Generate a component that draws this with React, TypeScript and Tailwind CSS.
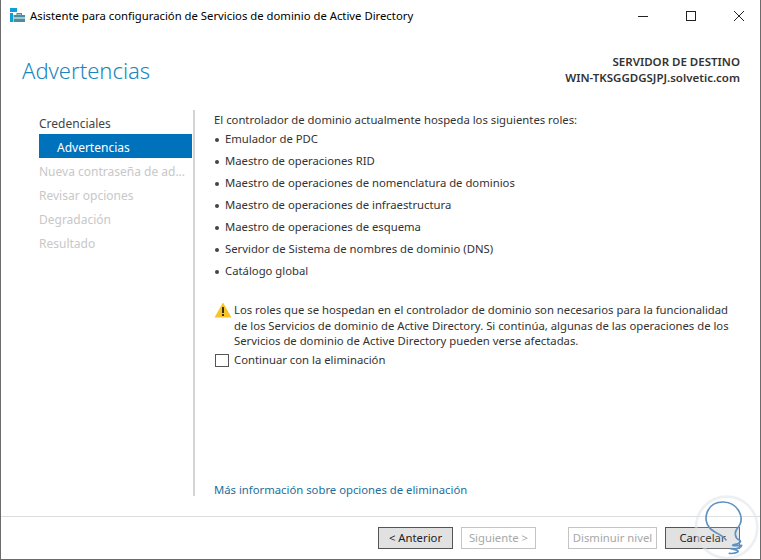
const roles = [
  "Emulador de PDC",
  "Maestro de operaciones RID",
  "Maestro de operaciones de nomenclatura de dominios",
  "Maestro de operaciones de infraestructura",
  "Maestro de operaciones de esquema",
  "Servidor de Sistema de nombres de dominio (DNS)",
  "Catálogo global",
];
const steps = ["Nueva contraseña de ad...", "Revisar opciones", "Degradación", "Resultado"];

export default function App() {
  return (
    <div className="w-[761px] h-[560px] bg-white flex flex-col border-l border-r border-b border-[#6b6b6b] text-[11.3px] text-[#333] overflow-hidden relative" style={{ fontFamily: '"Noto Sans", sans-serif' }}>
      <div className="h-[32px] flex items-center shrink-0">
        <svg width="16" height="14" viewBox="0 0 16 14" className="ml-[9px] mt-[-2px] shrink-0">
          <rect x="0" y="0" width="7" height="4" fill="#0e9fd8" />
          <rect x="0" y="5" width="3" height="9" fill="#0e9fd8" />
          <rect x="3.5" y="7" width="11.5" height="7" fill="#4a8f9c" />
          <rect x="7" y="5.5" width="4.5" height="1.5" fill="none" stroke="#4a8f9c" />
          <rect x="3.5" y="9.5" width="11.5" height="1" fill="#ffffff" />
        </svg>
        <span className="ml-[4px] text-black">Asistente para configuración de Servicios de dominio de Active Directory</span>
        <div className="ml-auto flex items-center">
          <svg width="12" height="12" viewBox="0 0 12 12" className="mr-[36px]"><path d="M1 6.5h10" stroke="#222" /></svg>
          <svg width="12" height="12" viewBox="0 0 12 12" className="mr-[36px]"><rect x="1.5" y="1.5" width="9" height="9" fill="none" stroke="#222" /></svg>
          <svg width="12" height="12" viewBox="0 0 12 12" className="mr-[15px]"><path d="M1 1l10 10M11 1L1 11" stroke="#222" /></svg>
        </div>
      </div>

      <div className="h-[78px] shrink-0 flex justify-between pl-[21px] pr-[20px]">
        <h1 className="text-[22px] font-light text-[#1a86bd] mt-[22px] leading-[32px]">Advertencias</h1>
        <div className="text-right font-semibold text-[11.5px] leading-[16px] mt-[22px] text-[#333]">
          <div>SERVIDOR DE DESTINO</div>
          <div>WIN-TKSGGDGSJPJ.solvetic.com</div>
        </div>
      </div>

      <div className="flex h-[386px] shrink-0">
        <nav className="w-[194px] shrink-0 pl-[38px] border-r-2 border-[#d4d4d4] text-[12px]">
          <div className="w-[153px] h-[24px] leading-[28px] text-[#444]">Credenciales</div>
          <div className="w-[153px] h-[24px] leading-[28px] pl-[18px] bg-[#0072bc] text-white">Advertencias</div>
          {steps.map((s) => (
            <div key={s} className="w-[153px] h-[24px] leading-[28px] text-[#c8c8c8] whitespace-nowrap">{s}</div>
          ))}
        </nav>
        <main className="flex-1 pl-[19px] flex flex-col">
          <p className="h-[19px] leading-[20px]">El controlador de dominio actualmente hospeda los siguientes roles:</p>
          <ul>
            {roles.map((r) => (
              <li key={r} className="h-[22px] flex items-center">
                <span className="w-[4px] h-[4px] rounded-full bg-[#444] ml-[1px] mr-[6px] mt-[-1px]" />
                <span className="leading-[18px] mt-[-3px]">{r}</span>
              </li>
            ))}
          </ul>
          <div className="flex mt-[19px]">
            <svg width="18" height="16" viewBox="0 0 18 16" className="shrink-0">
              <path d="M9 0.5L17.5 15.5H0.5Z" fill="#f6c52b" />
              <rect x="8" y="5" width="2" height="6" fill="#3a3000" />
              <rect x="8" y="12" width="2" height="2" fill="#3a3000" />
            </svg>
            <p className="ml-[2px] leading-[15.5px] w-[505px]">
              Los roles que se hospedan en el controlador de dominio son necesarios para la funcionalidad de los Servicios de dominio de Active Directory. Si continúa, algunas de las operaciones de los Servicios de dominio de Active Directory pueden verse afectadas.
            </p>
          </div>
          <label className="flex items-center mt-[3px] h-[18px]">
            <span className="w-[14px] h-[13px] border border-[#555] ml-[1px] mr-[5px]" />
            <span>Continuar con la eliminación</span>
          </label>
          <a className="mt-auto mb-[-3px] text-[#1a6f9e] leading-[18px]">Más información sobre opciones de eliminación</a>
        </main>
      </div>

      <div className="mt-[20px] flex-1 border-t border-[#dcdcdc] flex items-center pl-[377px]">
        <button className="w-[75px] h-[22px] border border-[#555] bg-[#e1e1e1] text-[#222]">&lt; Anterior</button>
        <button className="w-[75px] h-[22px] ml-[8px] border border-[#c4c4c4] text-[#a8a8a8]">Siguiente &gt;</button>
        <button className="w-[89px] h-[22px] ml-[32px] border border-[#c4c4c4] text-[#a8a8a8]">Disminuir nivel</button>
        <button className="w-[75px] h-[22px] ml-[8px] border border-[#555] bg-[#e1e1e1] text-[#222]">Cancelar</button>
      </div>

      <svg width="101" height="70" viewBox="0 0 303 210" className="absolute left-[659px] top-[490px] pointer-events-none">
        <circle cx="200" cy="112" r="92" fill="#ffffff" fillOpacity="0.15" stroke="#dfe3e7" strokeOpacity="0.55" strokeWidth="8" />
        <path d="M198 150C190 135 165 130 150 115C125 90 140 35 190 36C235 38 258 85 232 115C222 127 225 145 238 150C246 154 240 160 222 164C212 167 222 168 245 166C240 178 215 178 212 176C225 178 240 182 232 187C225 190 215 191 208 190" fill="none" stroke="#5f92c4" strokeWidth="5" strokeLinecap="round" strokeLinejoin="round" />
      </svg>
    </div>
  );
}
